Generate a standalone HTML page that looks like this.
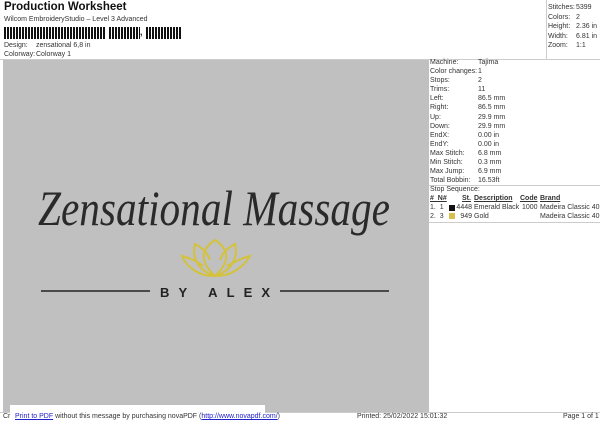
<!DOCTYPE html>
<html><head><style>
body{margin:0;width:600px;height:424px;background:#fff;position:relative;overflow:hidden;font-family:"Liberation Sans",sans-serif;color:#222}
.a{position:absolute;white-space:nowrap}
.s{font-size:7px;color:#333}
</style></head><body>
<div class="a" style="left:4px;top:1px;font-size:11.5px;font-weight:bold;color:#111">Production Worksheet</div>
<div class="a s" style="left:4px;top:16px">Wilcom EmbroideryStudio – Level 3 Advanced</div>
<div class="a" style="left:4px;top:27px;width:136px;height:12px;background:repeating-linear-gradient(90deg,#111 0 2px,#fff 2px 3px,#111 3px 5px,#fff 5px 6px)"></div>
<div class="a" style="left:106px;top:27px;width:2px;height:12px;background:#fff"></div>
<div class="a" style="left:140px;top:27px;width:4px;height:14px;font-size:9px;font-weight:bold">,</div>
<div class="a" style="left:146px;top:27px;width:36px;height:12px;background:repeating-linear-gradient(90deg,#111 0 2px,#fff 2px 3px,#111 3px 5px,#fff 5px 6px)"></div>
<div class="a s" style="left:4px;top:42px">Design:</div><div class="a s" style="left:36px;top:42px">zensational 6,8 in</div>
<div class="a s" style="left:4px;top:51px">Colorway:</div><div class="a s" style="left:36px;top:51px">Colorway 1</div>
<div class="a" style="left:0;top:59px;width:600px;height:1px;background:#ccc"></div>
<div class="a" style="left:546px;top:0;width:1px;height:59px;background:#ccc"></div>
<div class="a s" style="left:548px;top:3px;line-height:9.5px">Stitches:<br>Colors:<br>Height:<br>Width:<br>Zoom:</div>
<div class="a s" style="left:576px;top:3px;line-height:9.5px">5399<br>2<br>2.36 in<br>6.81 in<br>1:1</div>
<div class="a" style="left:3px;top:60px;width:426px;height:352px;background:#c0c0c0"></div>
<div class="a s" style="left:430px;top:58px;line-height:9.1px">Machine:<br>Color changes:<br>Stops:<br>Trims:<br>Left:<br>Right:<br>Up:<br>Down:<br>EndX:<br>EndY:<br>Max Stitch:<br>Min Stitch:<br>Max Jump:<br>Total Bobbin:</div>
<div class="a s" style="left:478px;top:58px;line-height:9.1px">Tajima<br>1<br>2<br>11<br>86.5 mm<br>86.5 mm<br>29.9 mm<br>29.9 mm<br>0.00 in<br>0.00 in<br>6.8 mm<br>0.3 mm<br>6.9 mm<br>16.53ft</div>
<div class="a" style="left:429px;top:185px;width:171px;height:1px;background:#ccc"></div>
<div class="a s" style="left:430px;top:186px">Stop Sequence:</div>
<div class="a s" style="left:430px;top:195px;font-weight:bold;text-decoration:underline">#&nbsp; N#</div>
<div class="a s" style="left:462px;top:195px;font-weight:bold;text-decoration:underline">St.</div>
<div class="a s" style="left:474px;top:195px;font-weight:bold;text-decoration:underline">Description</div>
<div class="a s" style="left:520px;top:195px;font-weight:bold;text-decoration:underline">Code</div>
<div class="a s" style="left:540px;top:195px;font-weight:bold;text-decoration:underline">Brand</div>
<div class="a s" style="left:430px;top:204px;line-height:8.5px">1.&nbsp; 1<br>2.&nbsp; 3</div>
<div class="a" style="left:449px;top:205px;width:6px;height:6px;background:#111"></div>
<div class="a" style="left:449px;top:213px;width:6px;height:6px;background:#d8c050"></div>
<div class="a s" style="left:456px;top:204px;line-height:8.5px;text-align:right;width:16px">4448<br>949</div>
<div class="a s" style="left:474px;top:204px;line-height:8.5px">Emerald Black<br>Gold</div>
<div class="a s" style="left:522px;top:204px">1000</div>
<div class="a s" style="left:540px;top:204px;line-height:8.5px">Madeira Classic 40<br>Madeira Classic 40</div>
<div class="a" style="left:429px;top:222px;width:171px;height:1px;background:#ccc"></div>
<svg class="a" style="left:0;top:0" width="600" height="424">
<text x="38" y="225" font-family="Liberation Serif" font-style="italic" font-size="50" fill="#2a2a2a" textLength="352" lengthAdjust="spacingAndGlyphs">Zensational Massage</text>
<g fill="none" stroke="#d4c23c" stroke-width="2">
<path d="M215 276 C200 262 200 250 215 240 C230 250 230 262 215 276Z"/>
<path d="M215 276 C196 270 192 255 195 244 C203 248 208 254 210 260"/>
<path d="M215 276 C234 270 238 255 235 244 C227 248 222 254 220 260"/>
<path d="M213 276 C198 276 186 266 182 256 C190 258 198 262 203 266"/>
<path d="M217 276 C232 276 244 266 250 256 C242 258 234 262 227 266"/>
</g>
<line x1="41" y1="291" x2="150" y2="291" stroke="#222" stroke-width="1.5"/>
<line x1="280" y1="291" x2="389" y2="291" stroke="#222" stroke-width="1.5"/>
<text x="160" y="297" font-family="Liberation Sans" font-weight="bold" font-size="13" fill="#222" textLength="110" lengthAdjust="spacing">BY ALEX</text>
</svg>
<div class="a" style="left:0;top:412px;width:600px;height:1px;background:#ccc"></div>
<div class="a" style="left:10px;top:405px;width:255px;height:14px;background:#fff"></div>
<div class="a s" style="left:3px;top:413px">Cr</div>
<div class="a s" style="left:15px;top:413px"><span style="color:#22c;text-decoration:underline">Print to PDF</span> without this message by purchasing novaPDF (<span style="color:#22c;text-decoration:underline">http://www.novapdf.com/</span>)</div>
<div class="a s" style="left:357px;top:413px">Printed: 25/02/2022 15:01:32</div>
<div class="a s" style="left:563px;top:413px">Page 1 of 1</div>
</body></html>
